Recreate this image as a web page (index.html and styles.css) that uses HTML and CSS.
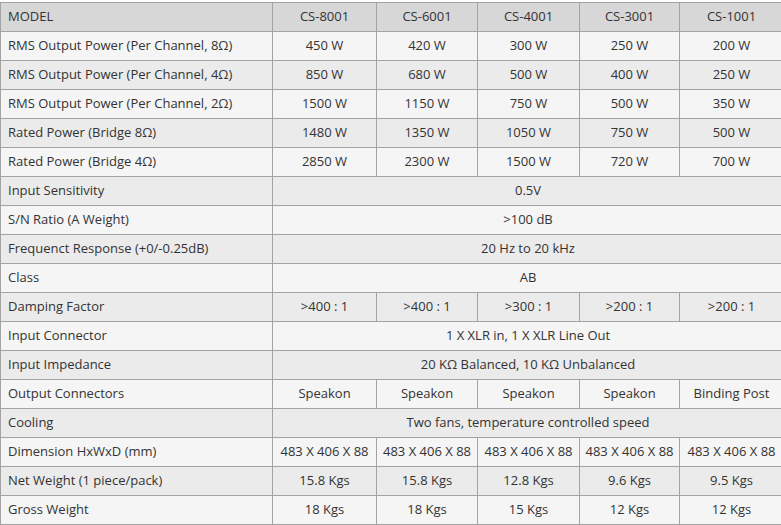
FILE: index.html
```html
<!DOCTYPE html>
<html>
<head>
<meta charset="utf-8">
<link rel="stylesheet" href="styles.css">
</head>
<body>
<table class="spec">
<colgroup>
<col class="c-label"><col class="c1"><col class="c2"><col class="c3"><col class="c4"><col class="c5">
</colgroup>
<tr class="head"><td>MODEL</td><td>CS-8001</td><td>CS-6001</td><td>CS-4001</td><td>CS-3001</td><td>CS-1001</td></tr>
<tr><td>RMS Output Power (Per Channel, 8Ω)</td><td>450 W</td><td>420 W</td><td>300 W</td><td>250 W</td><td>200 W</td></tr>
<tr><td>RMS Output Power (Per Channel, 4Ω)</td><td>850 W</td><td>680 W</td><td>500 W</td><td>400 W</td><td>250 W</td></tr>
<tr><td>RMS Output Power (Per Channel, 2Ω)</td><td>1500 W</td><td>1150 W</td><td>750 W</td><td>500 W</td><td>350 W</td></tr>
<tr><td>Rated Power (Bridge 8Ω)</td><td>1480 W</td><td>1350 W</td><td>1050 W</td><td>750 W</td><td>500 W</td></tr>
<tr><td>Rated Power (Bridge 4Ω)</td><td>2850 W</td><td>2300 W</td><td>1500 W</td><td>720 W</td><td>700 W</td></tr>
<tr><td>Input Sensitivity</td><td colspan="5">0.5V</td></tr>
<tr><td>S/N Ratio (A Weight)</td><td colspan="5">&gt;100 dB</td></tr>
<tr><td>Frequenct Response (+0/-0.25dB)</td><td colspan="5">20 Hz to 20 kHz</td></tr>
<tr><td>Class</td><td colspan="5">AB</td></tr>
<tr><td>Damping Factor</td><td>&gt;400 : 1</td><td>&gt;400 : 1</td><td>&gt;300 : 1</td><td>&gt;200 : 1</td><td>&gt;200 : 1</td></tr>
<tr><td>Input Connector</td><td colspan="5">1 X XLR in, 1 X XLR Line Out</td></tr>
<tr><td>Input Impedance</td><td colspan="5">20 KΩ Balanced, 10 KΩ Unbalanced</td></tr>
<tr><td>Output Connectors</td><td>Speakon</td><td>Speakon</td><td>Speakon</td><td>Speakon</td><td>Binding Post</td></tr>
<tr><td>Cooling</td><td colspan="5">Two fans, temperature controlled speed</td></tr>
<tr><td>Dimension HxWxD (mm)</td><td>483 X 406 X 88</td><td>483 X 406 X 88</td><td>483 X 406 X 88</td><td>483 X 406 X 88</td><td>483 X 406 X 88</td></tr>
<tr><td>Net Weight (1 piece/pack)</td><td>15.8 Kgs</td><td>15.8 Kgs</td><td>12.8 Kgs</td><td>9.6 Kgs</td><td>9.5 Kgs</td></tr>
<tr><td>Gross Weight</td><td>18 Kgs</td><td>18 Kgs</td><td>15 Kgs</td><td>12 Kgs</td><td>12 Kgs</td></tr>
</table>
</body>
</html>
```
FILE: styles.css
```css
html, body {
  margin: 0;
  padding: 0;
  background: #ffffff;
  overflow: hidden;
}
body {
  padding-top: 2px;
  font-family: "Open Sans", "DejaVu Sans", sans-serif;
  font-size: 13px;
  color: #333333;
}
.spec {
  border-collapse: collapse;
  table-layout: fixed;
  width: 783px;
  margin: 0;
}
.c-label { width: 272px; }
.c1 { width: 104px; }
.c2 { width: 101px; }
.c3 { width: 102px; }
.c4 { width: 100px; }
.c5 { width: 104px; }
.spec td {
  border: 1px solid #a3a3a3;
  height: 29px;
  padding: 0 0 2px 0;
  text-align: center;
  white-space: nowrap;
  line-height: 16px;
  box-sizing: border-box;
}
.spec td:first-child {
  text-align: left;
  padding-left: 7px;
}
.spec tr:nth-child(odd) td { background: #ebebeb; }
.spec tr:nth-child(even) td { background: #f5f5f5; }
.spec tr.head td { background: #d7d7d7; }
```
